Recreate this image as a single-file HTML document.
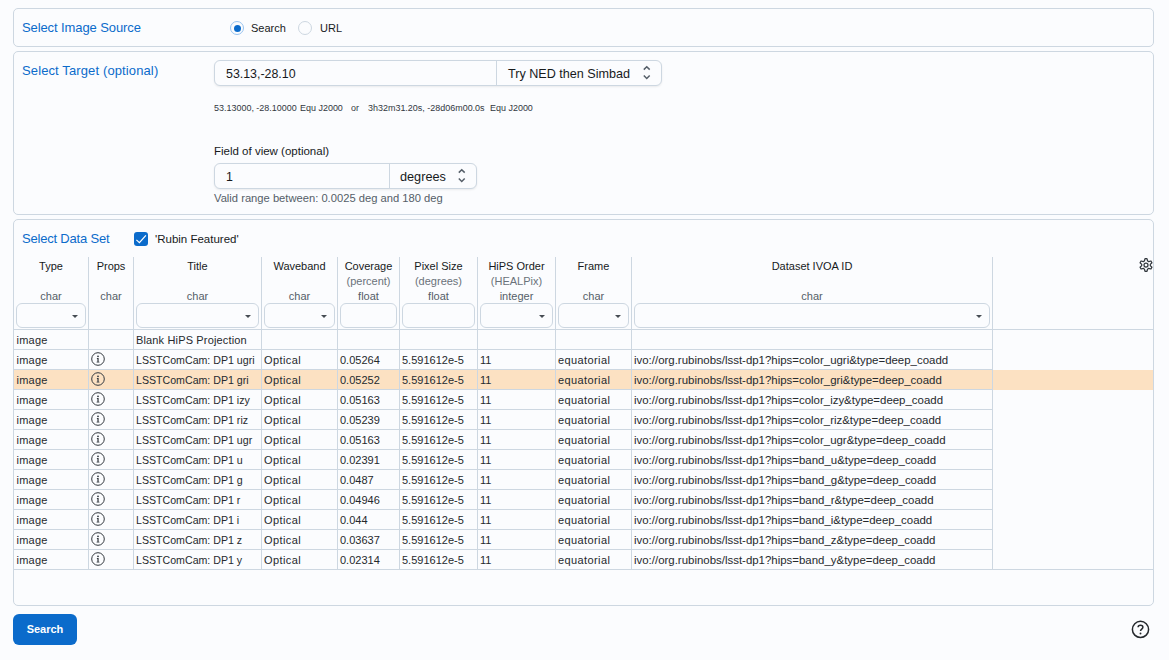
<!DOCTYPE html>
<html><head><meta charset="utf-8">
<style>
*{box-sizing:border-box;margin:0;padding:0}
html,body{width:1169px;height:660px;overflow:hidden;background:#FBFCFE;font-family:"Liberation Sans",sans-serif;color:#32383E}
.abs{position:absolute;white-space:nowrap}
.card{position:absolute;left:13px;width:1141px;border:1px solid #CDD7E1;border-radius:5px}
.ttl{position:absolute;color:#0B6BCB;font-size:13px;line-height:16px}
.radio{position:absolute;width:14px;height:14px;border-radius:50%;border:1px solid #CDD7E1;background:#FBFCFE}
.radio.on{border-color:#97C3F0}
.radio.on::after{content:"";position:absolute;left:2.5px;top:2.5px;width:7px;height:7px;border-radius:50%;background:#0B6BCB}
.inp{position:absolute;background:#FBFCFE;border:1px solid #CDD7E1;border-radius:6px;box-shadow:0 1px 2px rgba(21,21,21,.08)}
.lbl{font-size:11px;color:#171A1C}
.vl{position:absolute;width:1px;background:#CDD7E1}
.hl{position:absolute;height:1px;background:#CDD7E1}
.th{position:absolute;font-size:11px;line-height:15px;text-align:center;color:#171A1C}
.th.s{color:#6A727A}
.th.t{color:#555E68}
.flt{position:absolute;height:25px;top:303px;border:1px solid #CDD7E1;border-radius:6px;background:#FBFCFE}
.flt.dd::after{content:"";position:absolute;right:7px;top:11px;border-left:3px solid transparent;border-right:3px solid transparent;border-top:3px solid #464C53}
.row{position:absolute;left:14px;width:1139px;height:20px}
.row.sel{background:#FCE1C2}
.sm{top:101.6px;font-size:9.7px;line-height:11px;color:#32383E;transform:scaleX(0.925);transform-origin:0 0}
.c{position:absolute;font-size:11px;line-height:20px;color:#25292D;white-space:nowrap}
</style></head><body>

<!-- card 1 -->
<div class="card" style="top:8px;height:39px"></div>
<div class="ttl abs" style="left:22px;top:20px;letter-spacing:-0.1px">Select Image Source</div>
<div class="radio on" style="left:230px;top:21px"></div>
<div class="abs lbl" style="left:251px;top:21px;line-height:14px">Search</div>
<div class="radio" style="left:298px;top:21px"></div>
<div class="abs lbl" style="left:320px;top:21px;line-height:14px">URL</div>

<!-- card 2 -->
<div class="card" style="top:51px;height:164px"></div>
<div class="ttl abs" style="left:22px;top:63px;letter-spacing:0.12px">Select Target (optional)</div>
<div class="inp" style="left:214px;top:60px;width:448px;height:26px"></div>
<div class="vl" style="left:496px;top:61px;height:24px"></div>
<div class="abs" style="left:226px;top:66px;font-size:12.4px;line-height:16px;color:#171A1C">53.13,-28.10</div>
<div class="abs" style="left:508px;top:66px;font-size:12.6px;line-height:16px;color:#171A1C">Try NED then Simbad</div>
<svg class="abs" style="left:641px;top:65px" width="12" height="16" viewBox="0 0 12 16"><path d="M2.8 4.65 L5.75 1.7 L8.7 4.65 M2.8 10.5 L5.75 13.45 L8.7 10.5" fill="none" stroke="#555E68" stroke-width="1.5"/></svg>
<div class="abs sm" style="left:213.6px">53.13000, -28.10000</div><div class="abs sm" style="left:299.8px">Equ J2000</div><div class="abs sm" style="left:350.6px">or</div><div class="abs sm" style="left:368px">3h32m31.20s, -28d06m00.0s</div><div class="abs sm" style="left:489.8px">Equ J2000</div>
<div class="abs" style="left:214px;top:144px;font-size:11.5px;line-height:14px;color:#171A1C">Field of view (optional)</div>
<div class="inp" style="left:214px;top:163px;width:263px;height:26px"></div>
<div class="vl" style="left:389px;top:164px;height:24px"></div>
<div class="abs" style="left:226px;top:169px;font-size:12.4px;line-height:16px;color:#171A1C">1</div>
<div class="abs" style="left:400px;top:169px;font-size:12.7px;line-height:16px;color:#171A1C">degrees</div>
<svg class="abs" style="left:456px;top:168px" width="12" height="16" viewBox="0 0 12 16"><path d="M2.8 4.65 L5.75 1.7 L8.7 4.65 M2.8 10.5 L5.75 13.45 L8.7 10.5" fill="none" stroke="#555E68" stroke-width="1.5"/></svg>
<div class="abs" style="left:214px;top:191px;font-size:11.2px;line-height:14px;color:#555E68">Valid range between: 0.0025 deg and 180 deg</div>

<!-- card 3 -->
<div class="card" style="top:219px;height:387px"></div>
<div class="ttl abs" style="left:22px;top:231px;letter-spacing:-0.2px">Select Data Set</div>
<div class="abs" style="left:134px;top:232px;width:14px;height:14px;background:#0B6BCB;border-radius:3px"></div>
<svg class="abs" style="left:134px;top:232px" width="14" height="14" viewBox="0 0 14 14"><path d="M2.4 7.9 L5.4 10.6 L11.9 3.4" fill="none" stroke="#fff" stroke-width="1.25"/></svg>
<div class="abs lbl" style="left:155px;top:232px;font-size:11.5px;line-height:14px">'Rubin Featured'</div>

<div id="table"><div class="row sel" style="top:370px"></div>
<div class="vl" style="left:88px;top:257px;height:312px"></div>
<div class="vl" style="left:133px;top:257px;height:312px"></div>
<div class="vl" style="left:261px;top:257px;height:312px"></div>
<div class="vl" style="left:337px;top:257px;height:312px"></div>
<div class="vl" style="left:399px;top:257px;height:312px"></div>
<div class="vl" style="left:477px;top:257px;height:312px"></div>
<div class="vl" style="left:555px;top:257px;height:312px"></div>
<div class="vl" style="left:631px;top:257px;height:312px"></div>
<div class="vl" style="left:992px;top:257px;height:312px"></div>
<div class="hl" style="left:14px;top:329px;width:1139px"></div>
<div class="hl" style="left:14px;top:349px;width:978px"></div>
<div class="hl" style="left:14px;top:369px;width:978px"></div>
<div class="hl" style="left:14px;top:389px;width:978px"></div>
<div class="hl" style="left:14px;top:409px;width:978px"></div>
<div class="hl" style="left:14px;top:429px;width:978px"></div>
<div class="hl" style="left:14px;top:449px;width:978px"></div>
<div class="hl" style="left:14px;top:469px;width:978px"></div>
<div class="hl" style="left:14px;top:489px;width:978px"></div>
<div class="hl" style="left:14px;top:509px;width:978px"></div>
<div class="hl" style="left:14px;top:529px;width:978px"></div>
<div class="hl" style="left:14px;top:549px;width:978px"></div>
<div class="hl" style="left:14px;top:569px;width:1139px"></div>
<div class="th" style="left:13px;width:76px;top:259px">Type</div>
<div class="th t" style="left:13px;width:76px;top:289px">char</div>
<div class="flt dd" style="left:16px;width:70px"></div>
<div class="th" style="left:88px;width:46px;top:259px">Props</div>
<div class="th t" style="left:88px;width:46px;top:289px">char</div>
<div class="th" style="left:133px;width:129px;top:259px">Title</div>
<div class="th t" style="left:133px;width:129px;top:289px">char</div>
<div class="flt dd" style="left:136px;width:123px"></div>
<div class="th" style="left:261px;width:77px;top:259px">Waveband</div>
<div class="th t" style="left:261px;width:77px;top:289px">char</div>
<div class="flt dd" style="left:264px;width:71px"></div>
<div class="th" style="left:337px;width:63px;top:259px">Coverage</div>
<div class="th s" style="left:337px;width:63px;top:274px">(percent)</div>
<div class="th t" style="left:337px;width:63px;top:289px">float</div>
<div class="flt" style="left:340px;width:57px"></div>
<div class="th" style="left:399px;width:79px;top:259px">Pixel Size</div>
<div class="th s" style="left:399px;width:79px;top:274px">(degrees)</div>
<div class="th t" style="left:399px;width:79px;top:289px">float</div>
<div class="flt" style="left:402px;width:73px"></div>
<div class="th" style="left:477px;width:79px;top:259px">HiPS Order</div>
<div class="th s" style="left:477px;width:79px;top:274px">(HEALPix)</div>
<div class="th t" style="left:477px;width:79px;top:289px">integer</div>
<div class="flt dd" style="left:480px;width:73px"></div>
<div class="th" style="left:555px;width:77px;top:259px">Frame</div>
<div class="th t" style="left:555px;width:77px;top:289px">char</div>
<div class="flt dd" style="left:558px;width:71px"></div>
<div class="th" style="left:631px;width:362px;top:259px">Dataset IVOA ID</div>
<div class="th t" style="left:631px;width:362px;top:289px">char</div>
<div class="flt dd" style="left:634px;width:356px"></div>
<svg class="abs" style="left:1137.8px;top:257.1px" width="16" height="16" viewBox="0 0 16 16"><path fill="none" stroke="#32383E" stroke-width="1.25" stroke-linejoin="round" d="M5.85 4.28 L6.39 4.01 L7.01 1.73 L8.99 1.73 L9.61 4.01 L10.15 4.28 L10.65 4.61 L12.93 4.00 L13.93 5.72 L12.26 7.40 L12.30 8.00 L12.26 8.60 L13.93 10.28 L12.93 12.00 L10.65 11.39 L10.15 11.72 L9.61 11.99 L8.99 14.27 L7.01 14.27 L6.39 11.99 L5.85 11.72 L5.35 11.39 L3.07 12.00 L2.07 10.28 L3.74 8.60 L3.70 8.00 L3.74 7.40 L2.07 5.72 L3.07 4.00 L5.35 4.61 Z"/><circle cx="8" cy="8" r="2" fill="none" stroke="#32383E" stroke-width="1.25"/></svg>
<div class="c" style="left:16.5px;top:330px;letter-spacing:0.25px;">image</div>
<div class="c" style="left:136px;top:330px;letter-spacing:0.15px;">Blank HiPS Projection</div>
<div class="c" style="left:16.5px;top:350px;letter-spacing:0.25px;">image</div>
<svg class="abs" style="left:91px;top:352px" width="14" height="14" viewBox="0 0 14 14"><circle cx="7" cy="7" r="6.3" fill="none" stroke="#32383E" stroke-width="1"/><circle cx="7" cy="4.3" r="0.9" fill="#32383E"/><path d="M5.9 6.0 H7.65 V9.7 H8.4 V10.6 H5.6 V9.7 H6.4 V6.9 H5.9 Z" fill="#32383E"/></svg>
<div class="c" style="left:136px;top:350px;transform:scaleX(0.965);transform-origin:0 0;">LSSTComCam: DP1 ugri</div>
<div class="c" style="left:264px;top:350px;letter-spacing:0.4px;">Optical</div>
<div class="c" style="left:340px;top:350px;">0.05264</div>
<div class="c" style="left:402px;top:350px;">5.591612e-5</div>
<div class="c" style="left:480px;top:350px;">11</div>
<div class="c" style="left:558px;top:350px;letter-spacing:0.4px;">equatorial</div>
<div class="c" style="left:634px;top:350px;font-size:11.45px;">ivo://org.rubinobs/lsst-dp1?hips=color_ugri&amp;type=deep_coadd</div>
<div class="c" style="left:16.5px;top:370px;letter-spacing:0.25px;">image</div>
<svg class="abs" style="left:91px;top:372px" width="14" height="14" viewBox="0 0 14 14"><circle cx="7" cy="7" r="6.3" fill="none" stroke="#32383E" stroke-width="1"/><circle cx="7" cy="4.3" r="0.9" fill="#32383E"/><path d="M5.9 6.0 H7.65 V9.7 H8.4 V10.6 H5.6 V9.7 H6.4 V6.9 H5.9 Z" fill="#32383E"/></svg>
<div class="c" style="left:136px;top:370px;transform:scaleX(0.965);transform-origin:0 0;">LSSTComCam: DP1 gri</div>
<div class="c" style="left:264px;top:370px;letter-spacing:0.4px;">Optical</div>
<div class="c" style="left:340px;top:370px;">0.05252</div>
<div class="c" style="left:402px;top:370px;">5.591612e-5</div>
<div class="c" style="left:480px;top:370px;">11</div>
<div class="c" style="left:558px;top:370px;letter-spacing:0.4px;">equatorial</div>
<div class="c" style="left:634px;top:370px;font-size:11.45px;">ivo://org.rubinobs/lsst-dp1?hips=color_gri&amp;type=deep_coadd</div>
<div class="c" style="left:16.5px;top:390px;letter-spacing:0.25px;">image</div>
<svg class="abs" style="left:91px;top:392px" width="14" height="14" viewBox="0 0 14 14"><circle cx="7" cy="7" r="6.3" fill="none" stroke="#32383E" stroke-width="1"/><circle cx="7" cy="4.3" r="0.9" fill="#32383E"/><path d="M5.9 6.0 H7.65 V9.7 H8.4 V10.6 H5.6 V9.7 H6.4 V6.9 H5.9 Z" fill="#32383E"/></svg>
<div class="c" style="left:136px;top:390px;transform:scaleX(0.965);transform-origin:0 0;">LSSTComCam: DP1 izy</div>
<div class="c" style="left:264px;top:390px;letter-spacing:0.4px;">Optical</div>
<div class="c" style="left:340px;top:390px;">0.05163</div>
<div class="c" style="left:402px;top:390px;">5.591612e-5</div>
<div class="c" style="left:480px;top:390px;">11</div>
<div class="c" style="left:558px;top:390px;letter-spacing:0.4px;">equatorial</div>
<div class="c" style="left:634px;top:390px;font-size:11.45px;">ivo://org.rubinobs/lsst-dp1?hips=color_izy&amp;type=deep_coadd</div>
<div class="c" style="left:16.5px;top:410px;letter-spacing:0.25px;">image</div>
<svg class="abs" style="left:91px;top:412px" width="14" height="14" viewBox="0 0 14 14"><circle cx="7" cy="7" r="6.3" fill="none" stroke="#32383E" stroke-width="1"/><circle cx="7" cy="4.3" r="0.9" fill="#32383E"/><path d="M5.9 6.0 H7.65 V9.7 H8.4 V10.6 H5.6 V9.7 H6.4 V6.9 H5.9 Z" fill="#32383E"/></svg>
<div class="c" style="left:136px;top:410px;transform:scaleX(0.965);transform-origin:0 0;">LSSTComCam: DP1 riz</div>
<div class="c" style="left:264px;top:410px;letter-spacing:0.4px;">Optical</div>
<div class="c" style="left:340px;top:410px;">0.05239</div>
<div class="c" style="left:402px;top:410px;">5.591612e-5</div>
<div class="c" style="left:480px;top:410px;">11</div>
<div class="c" style="left:558px;top:410px;letter-spacing:0.4px;">equatorial</div>
<div class="c" style="left:634px;top:410px;font-size:11.45px;">ivo://org.rubinobs/lsst-dp1?hips=color_riz&amp;type=deep_coadd</div>
<div class="c" style="left:16.5px;top:430px;letter-spacing:0.25px;">image</div>
<svg class="abs" style="left:91px;top:432px" width="14" height="14" viewBox="0 0 14 14"><circle cx="7" cy="7" r="6.3" fill="none" stroke="#32383E" stroke-width="1"/><circle cx="7" cy="4.3" r="0.9" fill="#32383E"/><path d="M5.9 6.0 H7.65 V9.7 H8.4 V10.6 H5.6 V9.7 H6.4 V6.9 H5.9 Z" fill="#32383E"/></svg>
<div class="c" style="left:136px;top:430px;transform:scaleX(0.965);transform-origin:0 0;">LSSTComCam: DP1 ugr</div>
<div class="c" style="left:264px;top:430px;letter-spacing:0.4px;">Optical</div>
<div class="c" style="left:340px;top:430px;">0.05163</div>
<div class="c" style="left:402px;top:430px;">5.591612e-5</div>
<div class="c" style="left:480px;top:430px;">11</div>
<div class="c" style="left:558px;top:430px;letter-spacing:0.4px;">equatorial</div>
<div class="c" style="left:634px;top:430px;font-size:11.45px;">ivo://org.rubinobs/lsst-dp1?hips=color_ugr&amp;type=deep_coadd</div>
<div class="c" style="left:16.5px;top:450px;letter-spacing:0.25px;">image</div>
<svg class="abs" style="left:91px;top:452px" width="14" height="14" viewBox="0 0 14 14"><circle cx="7" cy="7" r="6.3" fill="none" stroke="#32383E" stroke-width="1"/><circle cx="7" cy="4.3" r="0.9" fill="#32383E"/><path d="M5.9 6.0 H7.65 V9.7 H8.4 V10.6 H5.6 V9.7 H6.4 V6.9 H5.9 Z" fill="#32383E"/></svg>
<div class="c" style="left:136px;top:450px;transform:scaleX(0.965);transform-origin:0 0;">LSSTComCam: DP1 u</div>
<div class="c" style="left:264px;top:450px;letter-spacing:0.4px;">Optical</div>
<div class="c" style="left:340px;top:450px;">0.02391</div>
<div class="c" style="left:402px;top:450px;">5.591612e-5</div>
<div class="c" style="left:480px;top:450px;">11</div>
<div class="c" style="left:558px;top:450px;letter-spacing:0.4px;">equatorial</div>
<div class="c" style="left:634px;top:450px;font-size:11.45px;">ivo://org.rubinobs/lsst-dp1?hips=band_u&amp;type=deep_coadd</div>
<div class="c" style="left:16.5px;top:470px;letter-spacing:0.25px;">image</div>
<svg class="abs" style="left:91px;top:472px" width="14" height="14" viewBox="0 0 14 14"><circle cx="7" cy="7" r="6.3" fill="none" stroke="#32383E" stroke-width="1"/><circle cx="7" cy="4.3" r="0.9" fill="#32383E"/><path d="M5.9 6.0 H7.65 V9.7 H8.4 V10.6 H5.6 V9.7 H6.4 V6.9 H5.9 Z" fill="#32383E"/></svg>
<div class="c" style="left:136px;top:470px;transform:scaleX(0.965);transform-origin:0 0;">LSSTComCam: DP1 g</div>
<div class="c" style="left:264px;top:470px;letter-spacing:0.4px;">Optical</div>
<div class="c" style="left:340px;top:470px;">0.0487</div>
<div class="c" style="left:402px;top:470px;">5.591612e-5</div>
<div class="c" style="left:480px;top:470px;">11</div>
<div class="c" style="left:558px;top:470px;letter-spacing:0.4px;">equatorial</div>
<div class="c" style="left:634px;top:470px;font-size:11.45px;">ivo://org.rubinobs/lsst-dp1?hips=band_g&amp;type=deep_coadd</div>
<div class="c" style="left:16.5px;top:490px;letter-spacing:0.25px;">image</div>
<svg class="abs" style="left:91px;top:492px" width="14" height="14" viewBox="0 0 14 14"><circle cx="7" cy="7" r="6.3" fill="none" stroke="#32383E" stroke-width="1"/><circle cx="7" cy="4.3" r="0.9" fill="#32383E"/><path d="M5.9 6.0 H7.65 V9.7 H8.4 V10.6 H5.6 V9.7 H6.4 V6.9 H5.9 Z" fill="#32383E"/></svg>
<div class="c" style="left:136px;top:490px;transform:scaleX(0.965);transform-origin:0 0;">LSSTComCam: DP1 r</div>
<div class="c" style="left:264px;top:490px;letter-spacing:0.4px;">Optical</div>
<div class="c" style="left:340px;top:490px;">0.04946</div>
<div class="c" style="left:402px;top:490px;">5.591612e-5</div>
<div class="c" style="left:480px;top:490px;">11</div>
<div class="c" style="left:558px;top:490px;letter-spacing:0.4px;">equatorial</div>
<div class="c" style="left:634px;top:490px;font-size:11.45px;">ivo://org.rubinobs/lsst-dp1?hips=band_r&amp;type=deep_coadd</div>
<div class="c" style="left:16.5px;top:510px;letter-spacing:0.25px;">image</div>
<svg class="abs" style="left:91px;top:512px" width="14" height="14" viewBox="0 0 14 14"><circle cx="7" cy="7" r="6.3" fill="none" stroke="#32383E" stroke-width="1"/><circle cx="7" cy="4.3" r="0.9" fill="#32383E"/><path d="M5.9 6.0 H7.65 V9.7 H8.4 V10.6 H5.6 V9.7 H6.4 V6.9 H5.9 Z" fill="#32383E"/></svg>
<div class="c" style="left:136px;top:510px;transform:scaleX(0.965);transform-origin:0 0;">LSSTComCam: DP1 i</div>
<div class="c" style="left:264px;top:510px;letter-spacing:0.4px;">Optical</div>
<div class="c" style="left:340px;top:510px;">0.044</div>
<div class="c" style="left:402px;top:510px;">5.591612e-5</div>
<div class="c" style="left:480px;top:510px;">11</div>
<div class="c" style="left:558px;top:510px;letter-spacing:0.4px;">equatorial</div>
<div class="c" style="left:634px;top:510px;font-size:11.45px;">ivo://org.rubinobs/lsst-dp1?hips=band_i&amp;type=deep_coadd</div>
<div class="c" style="left:16.5px;top:530px;letter-spacing:0.25px;">image</div>
<svg class="abs" style="left:91px;top:532px" width="14" height="14" viewBox="0 0 14 14"><circle cx="7" cy="7" r="6.3" fill="none" stroke="#32383E" stroke-width="1"/><circle cx="7" cy="4.3" r="0.9" fill="#32383E"/><path d="M5.9 6.0 H7.65 V9.7 H8.4 V10.6 H5.6 V9.7 H6.4 V6.9 H5.9 Z" fill="#32383E"/></svg>
<div class="c" style="left:136px;top:530px;transform:scaleX(0.965);transform-origin:0 0;">LSSTComCam: DP1 z</div>
<div class="c" style="left:264px;top:530px;letter-spacing:0.4px;">Optical</div>
<div class="c" style="left:340px;top:530px;">0.03637</div>
<div class="c" style="left:402px;top:530px;">5.591612e-5</div>
<div class="c" style="left:480px;top:530px;">11</div>
<div class="c" style="left:558px;top:530px;letter-spacing:0.4px;">equatorial</div>
<div class="c" style="left:634px;top:530px;font-size:11.45px;">ivo://org.rubinobs/lsst-dp1?hips=band_z&amp;type=deep_coadd</div>
<div class="c" style="left:16.5px;top:550px;letter-spacing:0.25px;">image</div>
<svg class="abs" style="left:91px;top:552px" width="14" height="14" viewBox="0 0 14 14"><circle cx="7" cy="7" r="6.3" fill="none" stroke="#32383E" stroke-width="1"/><circle cx="7" cy="4.3" r="0.9" fill="#32383E"/><path d="M5.9 6.0 H7.65 V9.7 H8.4 V10.6 H5.6 V9.7 H6.4 V6.9 H5.9 Z" fill="#32383E"/></svg>
<div class="c" style="left:136px;top:550px;transform:scaleX(0.965);transform-origin:0 0;">LSSTComCam: DP1 y</div>
<div class="c" style="left:264px;top:550px;letter-spacing:0.4px;">Optical</div>
<div class="c" style="left:340px;top:550px;">0.02314</div>
<div class="c" style="left:402px;top:550px;">5.591612e-5</div>
<div class="c" style="left:480px;top:550px;">11</div>
<div class="c" style="left:558px;top:550px;letter-spacing:0.4px;">equatorial</div>
<div class="c" style="left:634px;top:550px;font-size:11.45px;">ivo://org.rubinobs/lsst-dp1?hips=band_y&amp;type=deep_coadd</div></div><!--/table-->

<!-- button -->
<div class="abs" style="left:13px;top:614px;width:64px;height:31px;background:#0B6BCB;border-radius:6px"></div>
<div class="abs" style="left:13px;top:614px;width:64px;line-height:31px;text-align:center;color:#fff;font-weight:bold;font-size:11px">Search</div>
<svg class="abs" style="left:1130px;top:619px" width="21" height="21" viewBox="0 0 21 21"><circle cx="10.5" cy="10.4" r="8.1" fill="none" stroke="#25292D" stroke-width="1.5"/><path d="M8.1 8.3 C8.1 5.6 12.9 5.6 12.9 8.3 C12.9 10.1 10.5 10.2 10.5 12.1" fill="none" stroke="#25292D" stroke-width="1.5"/><circle cx="10.5" cy="14.5" r="0.95" fill="#25292D"/></svg>
</body></html>
